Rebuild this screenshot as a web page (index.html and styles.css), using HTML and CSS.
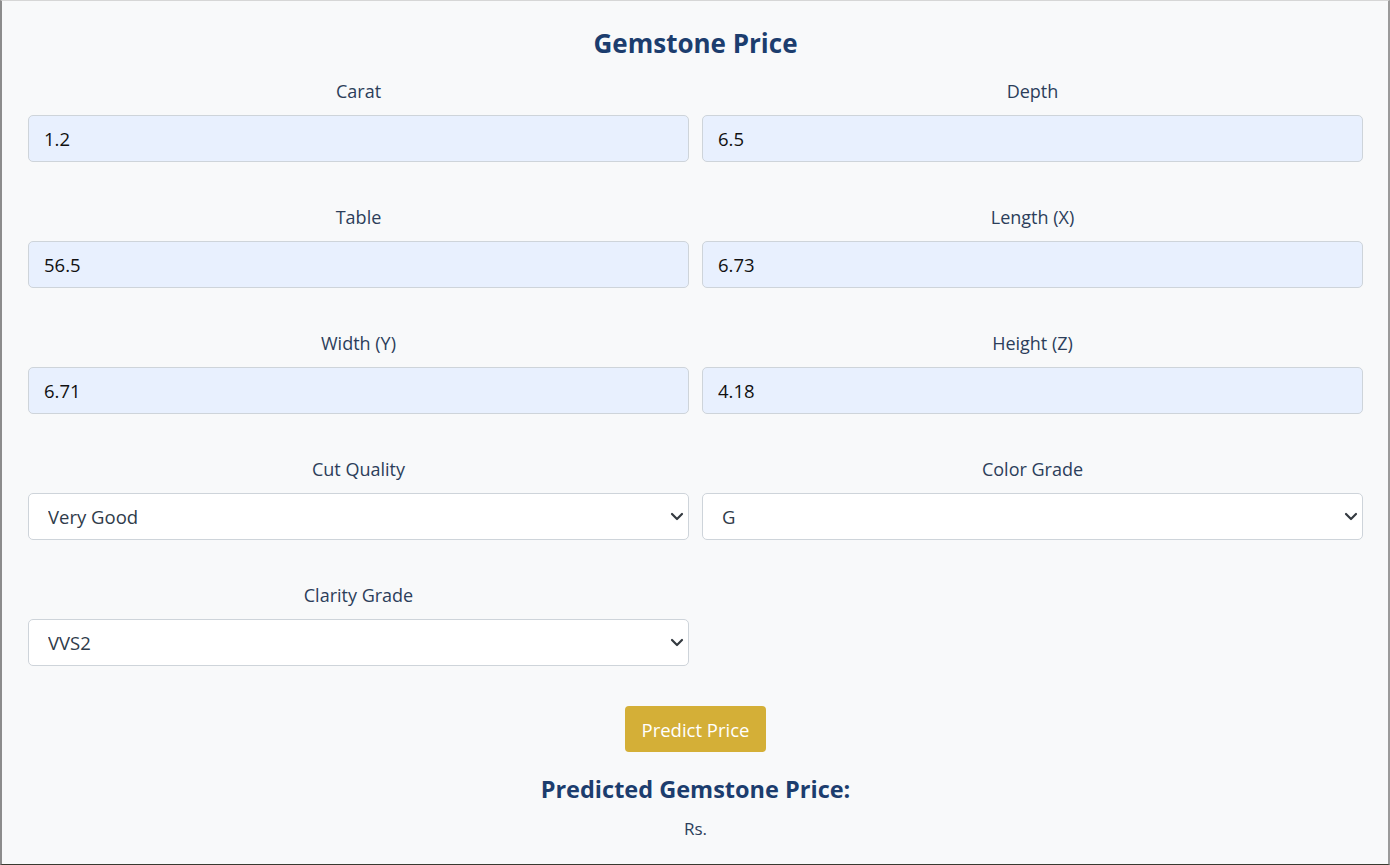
FILE: index.html
```html
<!DOCTYPE html>
<html lang="en">
<head>
<meta charset="utf-8">
<title>Gemstone Price</title>
<link rel="stylesheet" href="styles.css">
</head>
<body>
<div class="window">
  <main class="page">
    <h1 class="title">Gemstone Price</h1>
    <form class="grid">
      <div class="field">
        <label class="label">Carat</label>
        <input class="input" type="text" value="1.2">
      </div>
      <div class="field">
        <label class="label">Depth</label>
        <input class="input" type="text" value="6.5">
      </div>
      <div class="field">
        <label class="label">Table</label>
        <input class="input" type="text" value="56.5">
      </div>
      <div class="field">
        <label class="label">Length (X)</label>
        <input class="input" type="text" value="6.73">
      </div>
      <div class="field">
        <label class="label">Width (Y)</label>
        <input class="input" type="text" value="6.71">
      </div>
      <div class="field">
        <label class="label">Height (Z)</label>
        <input class="input" type="text" value="4.18">
      </div>
      <div class="field">
        <label class="label">Cut Quality</label>
        <div class="select-wrap">
          <select class="select"><option>Very Good</option></select>
          <svg class="chev" viewBox="0 0 16 16" width="16" height="16"><path d="M3 6l5 5 5-5" fill="none" stroke="#343a40" stroke-width="2.2" stroke-linecap="round" stroke-linejoin="round"/></svg>
        </div>
      </div>
      <div class="field">
        <label class="label">Color Grade</label>
        <div class="select-wrap">
          <select class="select"><option>G</option></select>
          <svg class="chev" viewBox="0 0 16 16" width="16" height="16"><path d="M3 6l5 5 5-5" fill="none" stroke="#343a40" stroke-width="2.2" stroke-linecap="round" stroke-linejoin="round"/></svg>
        </div>
      </div>
      <div class="field">
        <label class="label">Clarity Grade</label>
        <div class="select-wrap">
          <select class="select"><option>VVS2</option></select>
          <svg class="chev" viewBox="0 0 16 16" width="16" height="16"><path d="M3 6l5 5 5-5" fill="none" stroke="#343a40" stroke-width="2.2" stroke-linecap="round" stroke-linejoin="round"/></svg>
        </div>
      </div>
    </form>
    <div class="actions">
      <button class="btn" type="button">Predict Price</button>
    </div>
    <h2 class="result-title">Predicted Gemstone Price:</h2>
    <p class="result">Rs.</p>
  </main>
</div>
</body>
</html>
```

FILE: styles.css
```css
* { box-sizing: border-box; }
html, body { margin: 0; padding: 0; }
body {
  width: 1390px;
  height: 865px;
  overflow: hidden;
  background: #f8f9fa;
  font-family: "Open Sans", "Noto Sans", sans-serif;
}
.window {
  height: 865px;
  border-left: 2px solid #8c8c8c;
  border-right: 2px solid #9a9a9a;
  border-top: 1px solid #d6d6d6;
  border-bottom: 1px solid #3a3a30;
  background: #f8f9fa;
}
.page {
  padding: 23px 25px 0 26px;
}
.title {
  margin: 0 0 14px;
  text-align: center;
  font-size: 26px;
  line-height: 38px;
  font-weight: 700;
  color: #1c3d6e;
}
.grid {
  display: grid;
  grid-template-columns: 1fr 1fr;
  column-gap: 13px;
  row-gap: 40px;
}
.field {
  display: flex;
  flex-direction: column;
}
.label {
  text-align: center;
  font-size: 18px;
  line-height: 30px;
  color: #2c3e5a;
  margin-bottom: 9px;
}
.input, .select {
  width: 100%;
  height: 47px;
  border: 1px solid #ced4da;
  border-radius: 5px;
  font-family: inherit;
  font-size: 18.5px;
  color: #111;
  outline: none;
}
.input {
  background: #e8f0fe;
  padding: 0 15px;
}
.select-wrap {
  position: relative;
}
.select {
  -webkit-appearance: none;
  appearance: none;
  background: #fff;
  padding: 0 40px 0 19px;
  color: #2f3b4a;
}
.chev {
  position: absolute;
  right: 4px;
  top: 15px;
  pointer-events: none;
}
.actions {
  display: flex;
  justify-content: center;
  margin-top: 40px;
}
.btn {
  width: 141px;
  height: 46px;
  border: none;
  border-radius: 4px;
  background: #d4af37;
  color: #fff;
  font-family: inherit;
  font-size: 18.5px;
}
.result-title {
  margin: 21px 0 0;
  text-align: center;
  font-size: 23.5px;
  line-height: 32px;
  font-weight: 700;
  color: #1c3d6e;
}
.result {
  margin: 12px 0 0;
  text-align: center;
  font-size: 17px;
  line-height: 24px;
  color: #2c3e5a;
}
```
